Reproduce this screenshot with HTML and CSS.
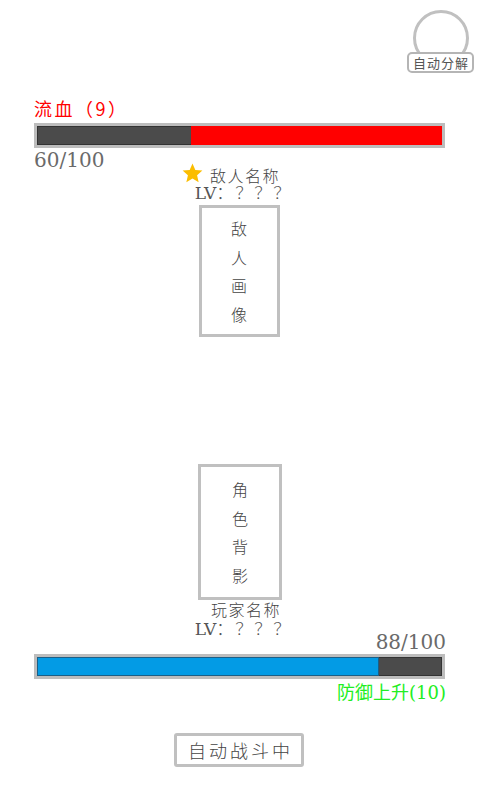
FILE: index.html
```html
<!DOCTYPE html>
<html lang="zh">
<head>
<meta charset="utf-8">
<link rel="stylesheet" href="styles.css">
</head>
<body>
<div class="page">
  <div class="top">
    <div class="decomp">
      <div class="ring"></div>
      <span class="decomp-label">自动分解</span>
    </div>
  </div>

  <div class="status bleed">流血（9）</div>
  <div class="bar enemy-bar"><div class="fill red" style="width:62%"></div></div>
  <div class="hp">60/100</div>

  <div class="name-row enemy-name">
    <svg class="star" viewBox="0 0 24 24" width="23" height="22"><path d="M12 1.5l3.1 7.1 7.7.7-5.8 5.1 1.7 7.6L12 18l-6.7 4 1.7-7.6L1.2 9.3l7.7-.7z" fill="#fbbd00"/></svg>
    <span>敌人名称</span>
  </div>
  <div class="lv enemy-lv"><span class="lv-latin">LV</span>：？？？</div>
  <div class="portrait enemy-portrait"><span>敌</span><span>人</span><span>画</span><span>像</span></div>

  <div class="portrait player-portrait"><span>角</span><span>色</span><span>背</span><span>影</span></div>
  <div class="name-row player-name"><span>玩家名称</span></div>
  <div class="lv player-lv"><span class="lv-latin">LV</span>：？？？</div>
  <div class="hp right">88/100</div>
  <div class="bar player-bar"><div class="fill blue" style="width:84.4%"></div></div>
  <div class="status buff">防御上升<span class="latin">(10)</span></div>

  <div class="actions"><button class="auto-btn">自动战斗中</button></div>
</div>
</body>
</html>
```

FILE: styles.css
```css
* { box-sizing: border-box; }
html, body { margin: 0; padding: 0; background: #fff; }
body {
  width: 480px;
  height: 800px;
  font-family: "Noto Sans CJK SC", sans-serif;
  font-weight: 300;
  color: #444;
}
.page {
  padding: 0 35px 0 34px;
  display: flex;
  flex-direction: column;
}
.top {
  display: flex;
  justify-content: flex-end;
  height: 96px;
  padding-top: 10px;
  margin-right: -24px;
}
.decomp {
  position: relative;
  width: 56px;
  height: 56px;
}
.ring {
  width: 56px;
  height: 56px;
  border: 3px solid #c0c0c0;
  border-radius: 50%;
}
.decomp-label {
  position: absolute;
  left: -6px;
  top: 42px;
  width: 67px;
  height: 21px;
  background: #fff;
  border: 2px solid #b5b5b5;
  border-radius: 5px;
  font-size: 13px;
  font-weight: normal;
  line-height: 17px;
  letter-spacing: 1px;
  text-indent: 1px;
  text-align: center;
  color: #555;
}
.status {
  font-size: 18px;
  line-height: 24px;
  height: 24px;
}
.latin, .lv-latin, .hp {
  font-family: "DejaVu Serif", "Liberation Serif", serif;
  font-weight: normal;
}
.bleed { color: #f00; letter-spacing: 2.5px; font-weight: normal; }
.buff { color: #22ee22; text-align: right; margin-right: -1px; font-weight: normal; }
.buff .latin { font-size: 18px; }
.bar {
  height: 25px;
  border: 3px solid #bdbdbd;
  background: #4b4b4b;
  display: flex;
  box-shadow: inset 0 0 0 1px #333;
}
.enemy-bar { justify-content: flex-end; margin-top: 3px; }
.fill { height: 100%; }
.red { background: #ff0000; }
.blue { background: #039be5; box-shadow: inset 0 0 0 1px #1c5f86; }
.hp {
  font-size: 20px;
  line-height: 24px;
  height: 24px;
  color: #6a6a6a;
}
.hp.right { text-align: right; margin-right: -1px; margin-top: -6px; }
.name-row {
  display: flex;
  align-items: center;
  justify-content: flex-start;
  gap: 6px;
  font-size: 16px;
  line-height: 16px;
  height: 16px;
  letter-spacing: 1.5px;
  color: #444;
}
.enemy-name { margin-top: -5px; padding-left: 147px; }
.star { display: block; margin-top: -4px; }
.lv {
  text-align: center;
  font-size: 17px;
  line-height: 17px;
  height: 17px;
  letter-spacing: 2px;
  padding-left: 8px;
  color: #555;
}
.lv-latin { font-size: 17px; letter-spacing: 0; }
.enemy-lv { margin-top: 0; }
.portrait {
  align-self: center;
  display: flex;
  flex-direction: column;
  justify-content: center;
  align-items: center;
  border: 3px solid #c0c0c0;
  font-size: 16px;
  color: #444;
}
.portrait span { line-height: 28.5px; }
.enemy-portrait {
  width: 81px;
  height: 132px;
  margin-top: 5px;
  margin-left: -1px;
}
.player-portrait {
  width: 84px;
  height: 136px;
  margin-top: 127px;
  margin-left: 1px;
}
.player-name { margin-top: 1px; padding-left: 177px; }
.player-lv { margin-top: 2px; }
.actions {
  display: flex;
  justify-content: center;
  margin-top: 30px;
}
.auto-btn {
  width: 130px;
  height: 34px;
  padding: 0;
  margin-left: -1px;
  background: #fff;
  border: 3px solid #c0c0c0;
  border-radius: 3px;
  font-family: "Noto Sans CJK SC", sans-serif;
  font-weight: 300;
  font-size: 18px;
  letter-spacing: 3px;
  text-indent: 3px;
  color: #444;
}
```
